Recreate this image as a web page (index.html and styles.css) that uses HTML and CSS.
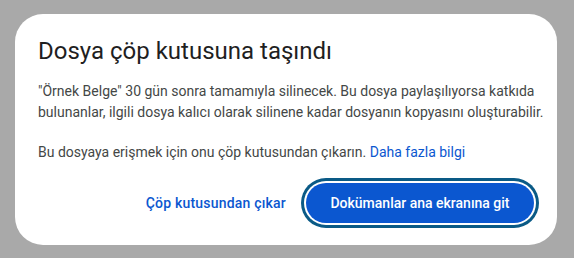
FILE: index.html
```html
<!DOCTYPE html>
<html lang="tr">
<head>
<meta charset="utf-8">
<title>Dosya çöp kutusuna taşındı</title>
<link rel="stylesheet" href="styles.css">
</head>
<body>
<div class="dialog" role="dialog">
  <h1 class="title">Dosya çöp kutusuna taşındı</h1>
  <p class="text">"Örnek Belge" 30 gün sonra tamamıyla silinecek. Bu dosya paylaşılıyorsa katkıda bulunanlar, ilgili dosya kalıcı olarak silinene kadar dosyanın kopyasını oluşturabilir.</p>
  <p class="text second">Bu dosyaya erişmek için onu çöp kutusundan çıkarın. <a class="link" href="#">Daha fazla bilgi</a></p>
  <div class="actions">
    <button class="btn-text">Çöp kutusundan çıkar</button>
    <button class="btn-filled">Dokümanlar ana ekranına git</button>
  </div>
</div>
</body>
</html>
```

FILE: styles.css
```css
html, body {
  margin: 0;
  padding: 0;
  background: #a9a9a9;
}
body {
  width: 574px;
  height: 258px;
  overflow: hidden;
}
.dialog {
  box-sizing: border-box;
  margin: 14px 0 0 15px;
  width: 542px;
  height: 231px;
  background: #fff;
  border-radius: 28px;
  padding: 23px 23px 22px 23px;
  display: flex;
  flex-direction: column;
}
.title {
  margin: 0;
  font-family: Roboto, "Noto Sans", sans-serif;
  font-weight: 400;
  font-size: 24px;
  line-height: 28px;
  color: #1f1f1f;
}
.text {
  margin: 16px -14px 0 0;
  font-family: Roboto, "Noto Sans", sans-serif;
  font-size: 14px;
  line-height: 21px;
  letter-spacing: 0;
  color: #444746;
}
.text.second {
  margin-top: 19px;
}
.link {
  color: #0b57d0;
  text-decoration: none;
}
.actions {
  margin-top: auto;
  display: flex;
  justify-content: flex-end;
  align-items: center;
  gap: 8px;
}
.btn-text {
  font-family: Roboto, "Noto Sans", sans-serif;
  font-size: 14px;
  font-weight: 500;
  letter-spacing: 0.2px;
  color: #0b57d0;
  background: none;
  border: none;
  padding: 0 12px;
  height: 40px;
  border-radius: 20px;
}
.btn-filled {
  font-family: Roboto, "Noto Sans", sans-serif;
  font-size: 14px;
  font-weight: 500;
  color: #fff;
  background: #0b57d0;
  border: none;
  width: 228px;
  height: 40px;
  border-radius: 20px;
  box-shadow: 0 0 0 2px #fff, 0 0 0 5px #0a5a86;
}
```
